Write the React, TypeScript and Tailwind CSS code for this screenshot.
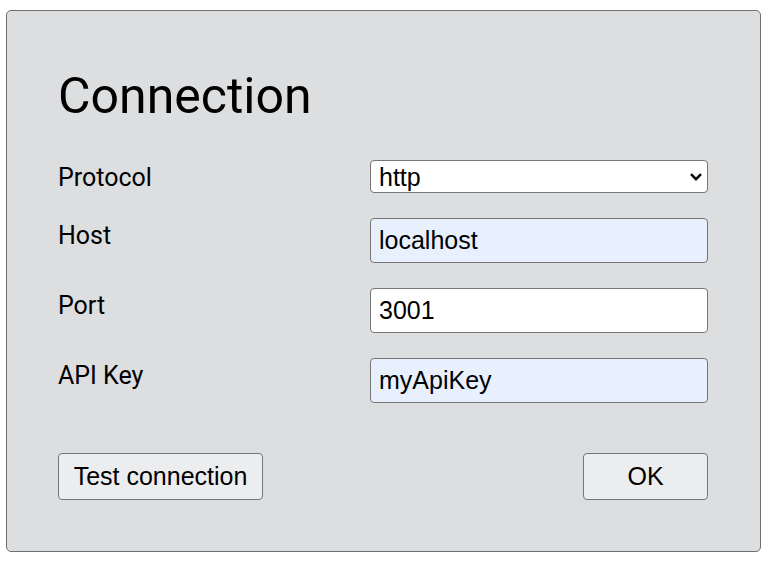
import { ChangeEvent, useState } from 'react';

const fields = [
  { id: 'host', label: 'Host', value: 'localhost', autofill: true },
  { id: 'port', label: 'Port', value: '3001', autofill: false },
  { id: 'apiKey', label: 'API Key', value: 'myApiKey', autofill: true },
];

export default function App() {
  const [values, setValues] = useState<Record<string, string>>({
    host: 'localhost',
    port: '3001',
    apiKey: 'myApiKey',
  });
  const [protocol, setProtocol] = useState('http');

  const update = (id: string) => (e: ChangeEvent<HTMLInputElement>) =>
    setValues(v => ({ ...v, [id]: e.target.value }));

  return (
    <div className="bg-white pt-[10px] pl-[6px] w-[770px] h-[568px] font-['Roboto',sans-serif] text-black">
      <div className="w-[755px] h-[542px] bg-[#dddee0] border border-[#6e6e6e] rounded-[5px] pt-[57px] pl-[51px] pr-[51px]">
        <h1 className="text-[50px] leading-[56px] font-normal">Connection</h1>

        <div className="mt-[36px] flex flex-col gap-[25px]">
          <div className="flex items-start">
            <label className="w-[312px] pt-[4px] text-[25px] leading-[28px]">Protocol</label>
            <div className="relative w-[338px] h-[33px]">
              <select
                value={protocol}
                onChange={e => setProtocol(e.target.value)}
                className="appearance-none w-full h-full bg-white border border-[#767676] rounded-[4px] pl-[8px] text-[25px] leading-[28px] font-['Liberation_Sans',Arial,sans-serif] outline-none"
              >
                <option value="http">http</option>
                <option value="https">https</option>
              </select>
              <svg
                className="absolute right-[5px] top-[12px] pointer-events-none"
                width="14"
                height="10"
                viewBox="0 0 14 10"
              >
                <path d="M2 2.2l5 5 5-5" fill="none" stroke="#000" strokeWidth="2.4" />
              </svg>
            </div>
          </div>

          {fields.map(f => (
            <div key={f.id} className="flex items-start">
              <label htmlFor={f.id} className="w-[312px] pt-[4px] text-[25px] leading-[28px]">
                {f.label}
              </label>
              <input
                id={f.id}
                value={values[f.id]}
                onChange={update(f.id)}
                className={`w-[338px] h-[45px] border border-[#767676] rounded-[4px] pl-[8px] text-[25px] font-['Liberation_Sans',Arial,sans-serif] outline-none ${
                  f.autofill ? 'bg-[#e8f0fe]' : 'bg-white'
                }`}
              />
            </div>
          ))}
        </div>

        <div className="mt-[50px] flex justify-between w-[650px]">
          <button className="w-[205px] h-[47px] bg-[#ecedef] border border-[#767676] rounded-[4px] text-[25px] font-['Liberation_Sans',Arial,sans-serif]">
            Test connection
          </button>
          <button className="w-[125px] h-[47px] bg-[#ecedef] border border-[#767676] rounded-[4px] text-[25px] font-['Liberation_Sans',Arial,sans-serif]">
            OK
          </button>
        </div>
      </div>
    </div>
  );
}
